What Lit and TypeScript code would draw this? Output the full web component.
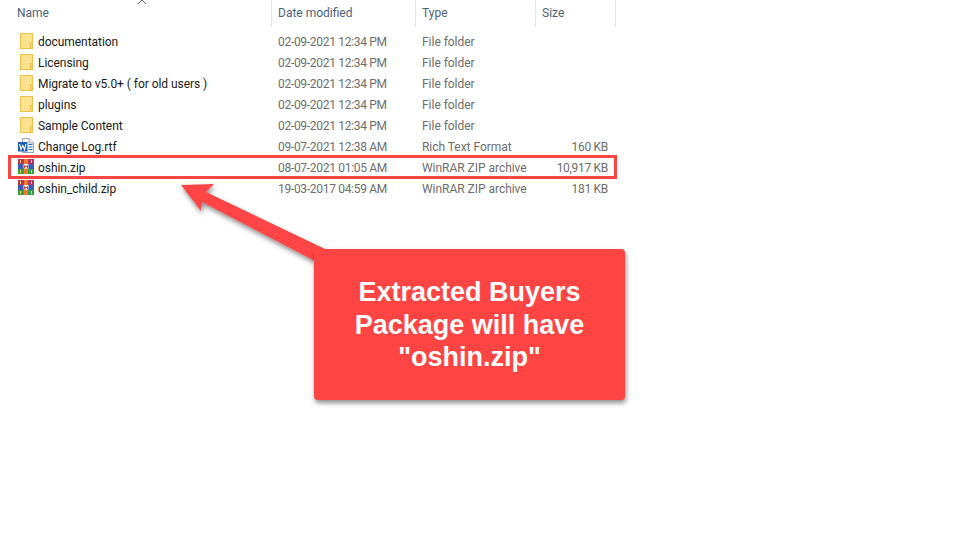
import { LitElement, html, css, svg } from "lit";
import { customElement } from "lit/decorators.js";

type Kind = "folder" | "word" | "rar";

interface FileRow {
  name: string;
  date: string;
  type: string;
  size: string;
  kind: Kind;
}

const ROWS: FileRow[] = [
  { name: "documentation", date: "02-09-2021 12:34 PM", type: "File folder", size: "", kind: "folder" },
  { name: "Licensing", date: "02-09-2021 12:34 PM", type: "File folder", size: "", kind: "folder" },
  { name: "Migrate to v5.0+ ( for old users )", date: "02-09-2021 12:34 PM", type: "File folder", size: "", kind: "folder" },
  { name: "plugins", date: "02-09-2021 12:34 PM", type: "File folder", size: "", kind: "folder" },
  { name: "Sample Content", date: "02-09-2021 12:34 PM", type: "File folder", size: "", kind: "folder" },
  { name: "Change Log.rtf", date: "09-07-2021 12:38 AM", type: "Rich Text Format", size: "160 KB", kind: "word" },
  { name: "oshin.zip", date: "08-07-2021 01:05 AM", type: "WinRAR ZIP archive", size: "10,917 KB", kind: "rar" },
  { name: "oshin_child.zip", date: "19-03-2017 04:59 AM", type: "WinRAR ZIP archive", size: "181 KB", kind: "rar" },
];

const folderIcon = svg`<svg width="16" height="16" viewBox="0 0 16 16">
  <rect x="2.5" y=".5" width="12" height="15" fill="#fde28f" stroke="#efc14a"/>
  <path d="M12.5 15.5V9.5H14.5V15.5Z" fill="#fbd676" stroke="#efc14a"/>
</svg>`;

const wordIcon = svg`<svg width="16" height="16" viewBox="0 0 16 16">
  <path d="M4.5 .5H11L15.5 5V14.5H4.5Z" fill="#fff" stroke="#9aa5b3"/>
  <path d="M11 .5V5H15.5" fill="#e8edf3" stroke="#9aa5b3"/>
  <path d="M10.5 6.5H14.5M10.5 9H14.5M10.5 11.5H14.5" stroke="#2b6fc4"/>
  <rect x="0" y="4" width="9.5" height="9.5" fill="#1f5eb5"/>
  <path d="M1.6 6L3 11.5L4.8 7.5L6.6 11.5L8 6" fill="none" stroke="#fff" stroke-width="1.1"/>
</svg>`;

const rarIcon = svg`<svg width="16" height="16" viewBox="0 0 16 16">
  <rect x="0" y="0" width="16" height="5" fill="#b8325f"/>
  <rect x="0" y="5" width="16" height="5" fill="#3d5cb8"/>
  <rect x="0" y="10" width="16" height="5" fill="#33a04a"/>
  <rect x="6" y="0" width="4" height="15" fill="#ee7a2c"/>
  <rect x="5.5" y="5" width="5" height="4.5" fill="#f8f5ee"/>
  <path d="M6.5 9V6.5L8 8L9.5 6.5V9" fill="none" stroke="#c0452c"/>
  <path d="M2.5 1V4M13.5 1V4M2.5 11V14M13.5 11V14" stroke="#ecd05a"/>
</svg>`;

const ICONS = { folder: folderIcon, word: wordIcon, rar: rarIcon };

@customElement("app-root")
export class AppRoot extends LitElement {
  static styles = css`
    :host {
      display: block;
      position: relative;
      width: 969px;
      height: 533px;
      overflow: hidden;
      background: #fff;
      font-family: Roboto, "Open Sans", sans-serif;
      font-size: 12px;
    }
    .head,
    .row {
      display: grid;
      grid-template-columns: 272px 144px 120px 80px;
    }
    .head {
      height: 25px;
      color: #4c607a;
    }
    .head > div {
      border-right: 1px solid #e5e5e5;
      padding-left: 6px;
      line-height: 27px;
    }
    .head > div:first-child {
      padding-left: 17px;
    }
    .list {
      padding-top: 6px;
    }
    .row {
      height: 21px;
      line-height: 23px;
      color: #6d6d6d;
    }
    .name {
      display: flex;
      align-items: flex-start;
      gap: 4px;
      padding-left: 18px;
      color: #1a1a1a;
      letter-spacing: -0.05px;
    }
    .name svg {
      display: block;
      flex: none;
      margin-top: 2px;
    }
    .date {
      padding-left: 6px;
      letter-spacing: -0.3px;
    }
    .type {
      padding-left: 6px;
      letter-spacing: -0.03px;
    }
    .size {
      text-align: right;
      padding-right: 8px;
      letter-spacing: -0.3px;
    }
    .sort {
      position: absolute;
      left: 137px;
      top: -1px;
    }
    .highlight {
      position: absolute;
      left: 8px;
      top: 155px;
      width: 603px;
      height: 18px;
      border: 3px solid #ff4444;
    }
    .arrow {
      position: absolute;
      left: 170px;
      top: 170px;
      overflow: visible;
    }
    .callout {
      position: absolute;
      left: 314px;
      top: 249px;
      width: 311px;
      height: 151px;
      box-sizing: border-box;
      padding-top: 27px;
      background: #ff4444;
      border-radius: 4px;
      box-shadow: 1px 3px 5px rgba(0, 0, 0, 0.45);
      color: #fff;
      font-family: "Liberation Sans", Arial, sans-serif;
      font-weight: 700;
      font-size: 27px;
      line-height: 32.5px;
      text-align: center;
    }
  `;

  render() {
    return html`
      <div class="head">
        <div>Name</div>
        <div>Date modified</div>
        <div>Type</div>
        <div>Size</div>
      </div>
      <svg class="sort" width="10" height="6" viewBox="0 0 10 6">
        <path d="M1 5L5 1L9 5" fill="none" stroke="#6d6d6d"/>
      </svg>
      <div class="list">
        ${ROWS.map(
          (r) => html`
            <div class="row">
              <div class="name">${ICONS[r.kind]}<span>${r.name}</span></div>
              <div class="date">${r.date}</div>
              <div class="type">${r.type}</div>
              <div class="size">${r.size}</div>
            </div>
          `
        )}
      </div>
      <div class="highlight"></div>
      <svg class="arrow" width="170" height="100" viewBox="0 0 170 100">
        <defs>
          <filter id="sh" x="-20%" y="-20%" width="140%" height="150%">
            <feDropShadow dx="1" dy="3" stdDeviation="2.5" flood-color="#000" flood-opacity="0.45"/>
          </filter>
        </defs>
        <path d="M11 15L44 14L36 22L155 79L143 90L32 32L31 41Z" fill="#ff4444" filter="url(#sh)"/>
      </svg>
      <div class="callout">Extracted Buyers<br />Package will have<br />"oshin.zip"</div>
    `;
  }
}
